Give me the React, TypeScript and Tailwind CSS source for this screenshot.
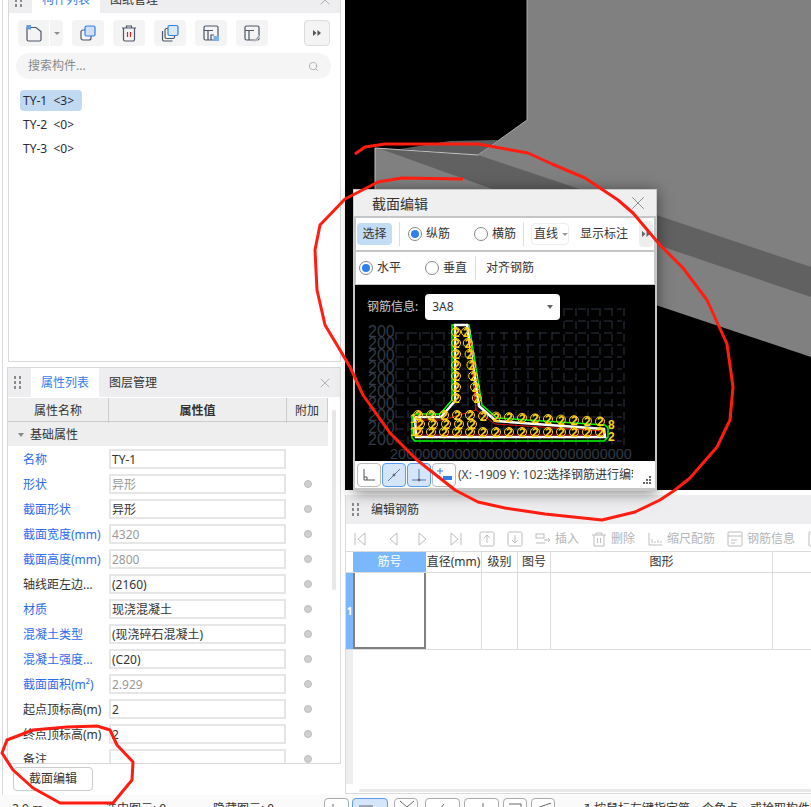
import { Search, X } from 'lucide-react';
import type { ReactNode } from 'react';

const props = [
  { name: '名称', value: 'TY-1', blue: true, dim: false, dot: false },
  { name: '形状', value: '异形', blue: true, dim: true, dot: true },
  { name: '截面形状', value: '异形', blue: true, dim: false, dot: true },
  { name: '截面宽度(mm)', value: '4320', blue: true, dim: true, dot: true },
  { name: '截面高度(mm)', value: '2800', blue: true, dim: true, dot: true },
  { name: '轴线距左边...', value: '(2160)', blue: false, dim: false, dot: true },
  { name: '材质', value: '现浇混凝土', blue: true, dim: false, dot: true },
  { name: '混凝土类型', value: '(现浇碎石混凝土)', blue: true, dim: false, dot: true },
  { name: '混凝土强度...', value: '(C20)', blue: true, dim: false, dot: true },
  { name: '截面面积(m²)', value: '2.929', blue: true, dim: true, dot: true },
  { name: '起点顶标高(m)', value: '2', blue: false, dim: false, dot: true },
  { name: '终点顶标高(m)', value: '2', blue: false, dim: false, dot: true },
  { name: '备注', value: '', blue: false, dim: false, dot: true },
];

function Grip() {
  return (
    <div className="grid grid-cols-2 gap-x-[3px] gap-y-[2px] w-[7px] shrink-0">
      {[0, 1, 2, 3, 4, 5].map((i) => (
        <span key={i} className="w-[2px] h-[3px] bg-[#8a8a8a]" />
      ))}
    </div>
  );
}

function ToolBox({ children, className = 'w-8' }: { children: ReactNode; className?: string }) {
  return (
    <div className={`h-[26px] ${className} bg-[#f4f4f4] rounded flex items-center justify-center shrink-0`}>
      {children}
    </div>
  );
}

function Ico({ children, size = 20, view = 20 }: { children: ReactNode; size?: number; view?: number }) {
  return (
    <svg width={size} height={size} viewBox={`0 0 ${view} ${view}`} fill="none" stroke="#4d5566" strokeWidth="1.2">
      {children}
    </svg>
  );
}

function More({ color = '#555' }: { color?: string }) {
  return (
    <svg width="8" height="6" viewBox="0 0 8 6" fill={color}>
      <path d="M0 0l3.5 3L0 6zM4.5 0L8 3 4.5 6z" />
    </svg>
  );
}

function TopTools() {
  return (
    <div className="flex items-center gap-[9px] pl-[9px] pr-[10px] pt-[7px]">
      <div className="h-[26px] w-[45px] bg-[#f4f4f4] rounded flex shrink-0">
        <div className="w-8 flex items-center justify-center border-r border-white">
          <Ico>
            <path d="M3 4.5h9l5 4v8a1.5 1.5 0 0 1-1.5 1.5h-11A1.5 1.5 0 0 1 3 16.5z" />
            <rect x="2.5" y="2" width="4.5" height="4.5" fill="#5f9df2" stroke="none" />
          </Ico>
        </div>
        <div className="flex-1 flex items-center justify-center">
          <span className="border-x-[3px] border-t-[3px] border-x-transparent border-t-[#8d8d8d]" />
        </div>
      </div>
      <ToolBox>
        <Ico>
          <rect x="3" y="7" width="10" height="10" rx="2" />
          <rect x="7" y="3" width="10" height="10" rx="1.5" fill="#cfe0f8" stroke="#2f80ed" />
        </Ico>
      </ToolBox>
      <ToolBox>
        <Ico>
          <path d="M3 5h14M7.5 5V3h5v2M4.5 5v11.5A1.5 1.5 0 0 0 6 18h8a1.5 1.5 0 0 0 1.5-1.5V5" />
          <path d="M8.5 9v5M11.5 9v5" stroke="#d8281f" />
        </Ico>
      </ToolBox>
      <ToolBox>
        <Ico>
          <path d="M2.5 8v8.5a1.5 1.5 0 0 0 1.5 1.5h8.5" />
          <rect x="5" y="5.5" width="9.5" height="10" rx="1.5" />
          <rect x="8" y="2.5" width="10" height="10" rx="1.5" fill="#dbe8fa" stroke="#2f80ed" />
        </Ico>
      </ToolBox>
      <ToolBox>
        <Ico>
          <rect x="3" y="3" width="14" height="14" rx="1.5" />
          <path d="M3 7.5h9M7 7.5V17M10 17v-5h3" />
          <rect x="12.5" y="13" width="5.5" height="5" fill="#7fb0ee" stroke="none" />
        </Ico>
      </ToolBox>
      <ToolBox>
        <Ico>
          <rect x="3" y="3" width="14" height="14" rx="1.5" />
          <path d="M3 7.5h9M7 7.5V17" />
          <path d="M11 18.5l5.5-6 1.5 1.5-5.5 5z" fill="#9aa2ad" stroke="#fff" strokeWidth="0.5" />
        </Ico>
      </ToolBox>
      <div className="ml-auto h-[26px] w-[26px] bg-[#f4f4f4] border border-[#dcdcdc] rounded flex items-center justify-center">
        <More />
      </div>
    </div>
  );
}

function ComponentPanel() {
  return (
    <div className="ml-[5px] mr-[4px] h-[362px] border-x border-b border-[#d9d9d9] bg-white overflow-hidden">
      <div className="h-[26px] -mt-[13px] bg-[#eeeef0] flex items-center pl-[6px] pr-[7px]">
        <Grip />
        <div className="ml-[10px] w-[68px] h-full bg-white text-[#2f80ed] text-[12px] flex items-center justify-center">构件列表</div>
        <div className="ml-[10px] text-[12px] text-[#333]">图纸管理</div>
        <X size={16} strokeWidth={1.1} className="ml-auto text-[#999]" />
      </div>
      <TopTools />
      <div className="ml-[7px] mr-[9px] mt-[7px] h-[26px] rounded-full bg-[#f5f5f5] flex items-center pl-[12px] pr-[12px] text-[12px] text-[#888]">
        搜索构件...
        <Search size={11} strokeWidth={1.5} className="ml-auto text-[#999]" />
      </div>
      <div className="mt-[11px] pl-[11px] flex flex-col gap-[3px] text-[12px] text-[#2b2b38] items-start">
        <div className="h-[21px] w-[62px] pl-[3px] rounded-sm bg-[#c2d9f2] flex items-center">TY-1&nbsp;&nbsp;&lt;3&gt;</div>
        <div className="h-[21px] pl-[3px] flex items-center">TY-2&nbsp;&nbsp;&lt;0&gt;</div>
        <div className="h-[21px] pl-[3px] flex items-center">TY-3&nbsp;&nbsp;&lt;0&gt;</div>
      </div>
    </div>
  );
}

function PropertyPanel() {
  return (
    <div className="ml-[4px] mr-[4px] mt-[5px] h-[397px] border border-[#d9d9d9] bg-white overflow-hidden relative">
      <div className="h-[29px] mb-px bg-[#eeeef0] flex items-center pl-[6px] pr-[7px]">
        <Grip />
        <div className="ml-[10px] w-[68px] h-full bg-white text-[#2f80ed] text-[12px] flex items-center justify-center">属性列表</div>
        <div className="ml-[10px] text-[12px] text-[#333]">图层管理</div>
        <X size={16} strokeWidth={1.1} className="ml-auto text-[#999]" />
      </div>
      <div className="w-[320px] grid grid-cols-[101px_178px_41px] h-[24px] bg-[#eeeeee] border-b border-[#ccc] text-[12px] text-[#333] text-center leading-[25px]">
        <div className="border-r border-[#ccc]">属性名称</div>
        <div className="border-r border-[#ccc] font-bold">属性值</div>
        <div className="border-r border-[#ccc]">附加</div>
      </div>
      <div className="w-[320px] h-[24px] bg-[#eeeeee] flex items-center pl-[10px] pt-[2px] gap-[6px] text-[12px] text-[#333]">
        <span className="border-x-[3px] border-t-[4px] border-x-transparent border-t-[#888]" />
        基础属性
      </div>
      <div className="pt-[3px] flex flex-col gap-[5px]">
        {props.map((p) => (
          <div key={p.name} className="h-[20px] w-[320px] flex items-center shrink-0">
            <div className={`w-[101px] pl-[15px] pt-[2px] text-[12px] whitespace-nowrap ${p.blue ? 'text-[#2b6cf0]' : 'text-[#333]'}`}>{p.name}</div>
            <div className={`w-[177px] h-[20px] border-2 border-[#e6e6e6] pl-[1px] text-[12px] leading-[18px] ${p.dim ? 'text-[#999]' : 'text-[#333]'}`}>
              {p.value}
            </div>
            <div className="flex-1 flex justify-center pl-[1px]">
              {p.dot && <span className="w-[8px] h-[8px] rounded-full bg-[#cfcfcf] border border-[#bdbdbd]" />}
            </div>
          </div>
        ))}
      </div>
      <div className="absolute right-[4px] top-[42px] w-[4px] h-[180px] bg-[#e8e8e8] rounded" />
    </div>
  );
}

function DisabledTools() {
  const gray = '#bdbdbd';
  const Btn = ({ children, label, w }: { children: ReactNode; label?: string; w: string }) => (
    <div className={`flex items-center gap-[4px] shrink-0 ${w}`}>
      <svg width="16" height="16" viewBox="0 0 16 16" fill="none" stroke={gray} strokeWidth="1">
        {children}
      </svg>
      {label && <span className="text-[12px] text-[#b5b5b5]">{label}</span>}
    </div>
  );
  return (
    <div className="h-[27px] flex items-center pl-[6px] pt-[2px] overflow-hidden whitespace-nowrap">
      <Btn w="w-[33px]"><path d="M3 2v12M13 2L6 8l7 6z" /></Btn>
      <Btn w="w-[30px]"><path d="M12 2L5 8l7 6z" /></Btn>
      <Btn w="w-[33px]"><path d="M4 2l7 6-7 6z" /></Btn>
      <Btn w="w-[31px]"><path d="M13 2v12M3 2l7 6-7 6z" /></Btn>
      <Btn w="w-[28px]"><rect x="1" y="1" width="14" height="14" rx="1.5" /><path d="M8 12V4M5 7l3-3 3 3" /></Btn>
      <Btn w="w-[28px]"><rect x="1" y="1" width="14" height="14" rx="1.5" /><path d="M8 4v8M5 9l3 3 3-3" /></Btn>
      <Btn w="w-[56px]" label="插入"><rect x="1" y="3" width="8" height="4" /><path d="M1 12h9M9 9h6M13 7l2 2-2 2" /></Btn>
      <Btn w="w-[56px]" label="删除"><path d="M1 4h14M5 4V2h6v2M3 4v11h10V4M6.5 7v5M9.5 7v5" /></Btn>
      <Btn w="w-[80px]" label="缩尺配筋"><path d="M2 2v12h13M5 8v4M8 10v2M11 9v3M14 10v2" /></Btn>
      <Btn w="w-[81px]" label="钢筋信息"><rect x="1" y="1" width="14" height="14" rx="1" /><path d="M1 5h14M4 9h6M4 12h4" /></Btn>
      <Btn w="w-[16px]"><rect x="1" y="1" width="14" height="14" rx="1" /><path d="M5 5h6M5 8h6" /></Btn>
    </div>
  );
}

function RebarTable() {
  return (
    <div className="h-[299px] mt-[5px] border-l border-b border-[#d9d9d9] bg-white flex flex-col overflow-hidden relative">
      <div className="h-[29px] shrink-0 bg-[#eeeef0] flex items-center pl-[6px] gap-[12px] text-[12px] text-[#333]">
        <Grip />
        编辑钢筋
      </div>
      <DisabledTools />
      <div className="grid grid-cols-[7px_73px_56px_36px_33px_222px_1fr] grid-rows-[21px_76px] border-y border-[#dcdcdc] text-[12px] text-[#333] text-center leading-[20px] whitespace-nowrap">
        <div className="border-b border-[#dcdcdc]" />
        <div className="bg-[#7ab8fb] text-white border-b border-[#dcdcdc]">筋号</div>
        <div className="border-r border-b border-[#dcdcdc]">直径(mm)</div>
        <div className="border-r border-b border-[#dcdcdc]">级别</div>
        <div className="border-r border-b border-[#dcdcdc]">图号</div>
        <div className="border-r border-b border-[#dcdcdc]">图形</div>
        <div className="border-b border-[#dcdcdc]" />
        <div className="bg-[#7ab8fb] text-white text-[10px] font-bold flex items-center justify-center">1</div>
        <div className="border-2 border-t-0 border-[#808080]" />
        <div className="border-r border-[#dcdcdc]" />
        <div className="border-r border-[#dcdcdc]" />
        <div className="border-r border-[#dcdcdc]" />
        <div className="border-r border-[#dcdcdc]" />
        <div />
      </div>
      <div className="w-[7px] h-[134px] bg-[#eeeeee]" />
      <div className="ml-[13px] mt-[5px] h-[3px] bg-[#e8e8e8] rounded" />
    </div>
  );
}

function SectionCanvas() {
  const rowsY = [309, 321, 333, 345, 357, 369, 381, 393, 405, 417, 429, 441];
  const colsX = Array.from({ length: 20 }, (_, i) => 396 + i * 12);
  const labels = [330, 342, 354, 366, 378, 390, 402, 414, 426, 438];
  const bottom = Array.from({ length: 15 }, (_, i) => 418 + i * 13);
  const bottomRow = bottom.map((x) => ({ x, y: 432 }));
  const topRow = bottom.map((x, i) => ({ x, y: i < 5 ? 415 : 416 + (i - 5) * 0.6 }));
  const web = Array.from({ length: 7 }, (_, i) => 332 + i * 11);
  const rebars = [
    ...bottomRow,
    ...topRow,
    ...bottom.slice(0, 5).map((x) => ({ x: x + 2, y: 424 })),
    ...web.map((y) => ({ x: 456, y })),
    ...web.map((y, i) => ({ x: 466 + i * 1.8, y })),
  ];
  return (
    <svg className="block" width="300" height="176" viewBox="355 285 300 176">
      <g stroke="#2f3540" strokeWidth="1" strokeDasharray="8 5">
        {rowsY.map((y) => (
          <line key={y} x1={y < 330 ? 565 : 396} x2="622" y1={y} y2={y} />
        ))}
        {colsX.map((x) => (
          <line key={x} x1={x} x2={x} y1={x > 560 ? 308 : 332} y2="445" />
        ))}
      </g>
      <g fill="#343a46" fontFamily="Liberation Sans, sans-serif" fontSize="16">
        {labels.map((y) => (
          <text key={y} x="368" y={y + 7}>200</text>
        ))}
        <text x="390" y="459" fontSize="14.5">200000000000000000000000000000</text>
      </g>
      <polyline fill="none" stroke="#00ff00" strokeWidth="1.5" points="412,417 415,414 440,414 452,400 452,325 469,325 482,405 497,418 605,425 608,428 608,437 604,441 415,441 412,438 412,417" />
      <polyline fill="none" stroke="#ffffff" strokeWidth="2.5" points="415,417 441,417 455,401 455,325 467,325 479,406 496,421 604,429 605,437 416,437 415,417" />
      <polyline fill="none" stroke="#e01010" strokeWidth="1" points="418,420 443,420 476,410 470,340 476,410 495,424 602,431 602,435 418,435 418,420" />
      <g stroke="#ffd21a" fill="none" strokeWidth="1">
        {rebars.map((r, i) => (
          <circle key={i} cx={r.x} cy={r.y} r="4.5" />
        ))}
      </g>
      <g fill="#ffd21a" fontFamily="Liberation Sans, sans-serif" fontSize="12" fontWeight="bold">
        {rebars.map((r, i) => (
          <text key={i} x={r.x - 3} y={r.y + 5}>2</text>
        ))}
        <text x="410" y="423">1</text>
        <text x="410" y="436">1</text>
        <text x="608" y="429">8</text>
        <text x="608" y="441">2</text>
      </g>
    </svg>
  );
}

function Radio({ on }: { on?: boolean }) {
  return (
    <span className="w-[14px] h-[14px] rounded-full border border-[#888] bg-white flex items-center justify-center shrink-0">
      {on && <span className="w-[8px] h-[8px] rounded-full bg-[#2f80ed]" />}
    </span>
  );
}

function SectionDialog() {
  const Snap = ({ active, children }: { active?: boolean; children: ReactNode }) => (
    <div className={`w-[24px] h-[24px] rounded-[4px] border flex items-center justify-center shrink-0 ${active ? 'border-[#5b9bee] bg-[#d5e5fa]' : 'border-[#bbb] bg-white'}`}>
      <svg width="18" height="18" viewBox="0 0 18 18" fill="none" stroke="#555" strokeWidth="1">
        {children}
      </svg>
    </div>
  );
  return (
    <div className="absolute left-[353px] top-[189px] w-[304px] h-[302px] bg-[#c4c6c8] border border-[#c9c9c9] shadow-[0_2px_14px_rgba(0,0,0,0.5)] flex flex-col text-[12px] text-[#333]">
      <div className="h-[26px] bg-[#efefef] flex items-center pl-[18px] pr-[7px] text-[14px]">
        截面编辑
        <X size={22} strokeWidth={1} className="ml-auto text-[#888]" />
      </div>
      <div className="mx-[2px] mt-[2px] h-[32px] bg-white flex items-center pl-[1px] whitespace-nowrap">
        <div className="w-[35px] h-[22px] bg-[#c2dcf5] rounded flex items-center justify-center">选择</div>
        <span className="ml-[7px] w-px h-[24px] bg-[#ddd]" />
        <span className="ml-[8px]"><Radio on /></span>
        <span className="ml-[4px]">纵筋</span>
        <span className="ml-[24px]"><Radio /></span>
        <span className="ml-[4px]">横筋</span>
        <span className="ml-[7px] w-px h-[24px] bg-[#ddd]" />
        <span className="ml-[7px] w-[38px] h-[22px] rounded border border-[#eee] flex items-center pl-[2px] gap-[4px]">
          直线
          <span className="border-x-[3px] border-t-[3px] border-x-transparent border-t-[#999]" />
        </span>
        <span className="ml-[11px]">显示标注</span>
        <span className="ml-[11px] w-[14px] h-[26px] bg-[#eee] rounded flex items-center justify-center">
          <More color="#666" />
        </span>
      </div>
      <div className="mx-[2px] mt-[2px] h-[32px] bg-white flex items-center pl-[3px] whitespace-nowrap">
        <Radio on />
        <span className="ml-[4px]">水平</span>
        <span className="ml-[24px]"><Radio /></span>
        <span className="ml-[4px]">垂直</span>
        <span className="ml-[8px] w-px h-[24px] bg-[#ddd]" />
        <span className="ml-[10px]">对齐钢筋</span>
      </div>
      <div className="mx-[1px] mt-px h-[176px] bg-black relative overflow-hidden">
        <SectionCanvas />
        <div className="absolute left-[12px] top-[9px] h-[26px] flex items-center gap-[7px] text-[#ccc] whitespace-nowrap">
          钢筋信息:
          <div className="w-[135px] h-[26px] bg-white rounded text-[#333] flex items-center px-[7px] justify-between">
            3A8
            <span className="border-x-[3px] border-t-[4px] border-x-transparent border-t-[#666]" />
          </div>
        </div>
      </div>
      <div className="mx-[1px] h-[27px] bg-white flex items-center pl-[2px] relative overflow-hidden whitespace-nowrap">
        <div className="flex gap-px">
          <Snap><path d="M4 3v11h11M4 11h3v3" /></Snap>
          <Snap active><path d="M3 15L15 3" stroke="#4d78b8" /><circle cx="9" cy="9" r="1" /></Snap>
          <Snap active><path d="M2 14h14M9 3v11" stroke="#4d78b8" /><circle cx="9" cy="14" r="1" /></Snap>
          <Snap><path d="M5 2v6M2 5h6" stroke="#2f80ed" /><rect x="8" y="10" width="9" height="4" fill="#2f80ed" stroke="none" /></Snap>
        </div>
        <span className="absolute left-[103px] top-[5px] w-[89px] overflow-hidden text-[#444]">(X: -1909 Y: 1023)</span>
        <span className="absolute left-[192px] top-[5px] w-[86px] overflow-hidden">选择钢筋进行编辑</span>
        <div className="absolute right-[4px] bottom-[4px] grid grid-cols-3 gap-px">
          {[0, 1, 2, 3, 4, 5, 6, 7, 8].map((i) => (
            <span key={i} className={`w-[2px] h-[2px] ${[0, 1, 3].includes(i) ? 'bg-transparent' : 'bg-[#666]'}`} />
          ))}
        </div>
      </div>
    </div>
  );
}

function Model3D() {
  return (
    <svg className="block" width="466" height="490" viewBox="345 0 466 490">
      <polygon fill="#808080" points="527,0 811,0 811,357 375,211 375,148 478,155 527,120" />
      <polygon fill="#5d5d5d" points="450,141 498,140 478,155 400,149" />
      <polygon fill="#616161" points="378,148 478,155 811,267 811,297 495,190" />
      <polyline fill="none" stroke="#a8a8a8" strokeWidth="1" points="527,0 527,120 478,155" />
      <polyline fill="none" stroke="#c2c2c2" strokeWidth="1" points="375,211 375,148 478,155" />
    </svg>
  );
}

function StatusBar() {
  const boxes = [
    { w: 'w-[25px]', ml: 'ml-0', d: 'M8 5v10', on: false },
    { w: 'w-[36px]', ml: 'ml-[3px]', d: 'M6 7h14', on: true },
    { w: 'w-[24px]', ml: 'ml-[6px]', d: 'M5 2l7 6 7-6', on: false },
    { w: 'w-[35px]', ml: 'ml-[7px]', d: 'M14 10l4-5', on: false },
    { w: 'w-[35px]', ml: 'ml-[4px]', d: 'M18 4v10', on: false },
    { w: 'w-[24px]', ml: 'ml-[4px]', d: 'M5 5h12v10', on: false },
    { w: 'w-[24px]', ml: 'ml-[4px]', d: 'M5 9l14-5', on: false },
  ];
  return (
    <div className="h-[12px] bg-[#fafafa] flex items-start overflow-hidden whitespace-nowrap text-[12px] text-[#333] leading-[16px]">
      <span className="ml-[12px] mt-[6px] w-[93px] shrink-0">2.9 m</span>
      <span className="mt-[6px] w-[108px] shrink-0">选中图元: 0</span>
      <span className="mt-[6px] w-[111px] shrink-0">隐藏图元: 0</span>
      <div className="mt-[3px] flex shrink-0">
        {boxes.map((b) => (
          <span key={b.d} className={`h-[20px] ${b.w} ${b.ml} rounded-[4px] border overflow-hidden ${b.on ? 'border-[#5b9bee] bg-[#d5e5fa]' : 'border-[#aaa] bg-white'}`}>
            <svg width="24" height="12" viewBox="0 0 24 12" fill="none" stroke="#666" strokeWidth="1">
              <path d={b.d} />
            </svg>
          </span>
        ))}
      </div>
      <span className="ml-[24px] mt-[6px] shrink-0">↗ 按鼠标左键指定第一个角点，或拾取构件图元</span>
    </div>
  );
}

export default function App() {
  return (
    <div className="relative w-[811px] h-[807px] overflow-hidden bg-white font-['Noto_Sans','Noto_Sans_CJK_SC',sans-serif]">
      <div className="flex h-[795px]">
        <div className="w-[343px] ml-[2px] shrink-0 flex flex-col border-l border-[#d9d9d9]">
          <ComponentPanel />
          <PropertyPanel />
          <div className="ml-[10px] mt-[3px] w-[80px] h-[24px] border border-[#ccc] rounded text-[12px] text-[#333] flex items-center justify-center">
            截面编辑
          </div>
        </div>
        <div className="flex-1 min-w-0 flex flex-col">
          <div className="h-[490px] bg-black shrink-0">
            <Model3D />
          </div>
          <RebarTable />
        </div>
      </div>
      <StatusBar />
      <SectionDialog />
      <svg className="absolute inset-0 pointer-events-none" width="811" height="807" fill="none" stroke="#ff1c10" strokeWidth="3" strokeLinejoin="round">
        <polyline points="355,154 365,147 385,144 478,144 528,153 552,164 585,178 618,200 633,213 660,245 683,268 707,300 727,344 733,387 730,420 717,447 690,478 675,490 660,500 635,512 602,520 545,514 505,508 478,502 455,490 417,460 390,433 363,395 350,367 340,350 325,325 317,290 315,250 320,225 345,199 378,182 402,178 463,179" />
        <polyline points="97,726 110,730 117,745 133,762 132,780 113,803 60,803 33,788 13,770 2,753 7,740 33,730 67,727 97,726" />
      </svg>
    </div>
  );
}
